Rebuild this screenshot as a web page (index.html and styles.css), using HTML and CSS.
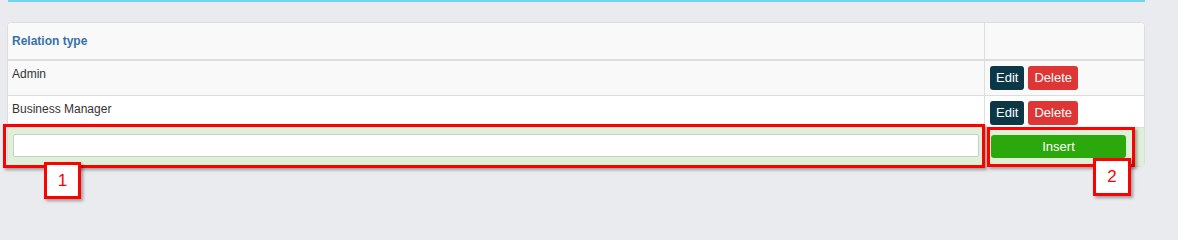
FILE: index.html
```html
<!DOCTYPE html>
<html>
<head>
<meta charset="utf-8">
<link rel="stylesheet" href="styles.css">
</head>
<body>
<div class="topline"></div>
<div class="panel">
  <div class="row head">
    <div class="cell first">Relation type</div>
    <div class="cell"></div>
  </div>
  <div class="row odd">
    <div class="cell first">Admin</div>
    <div class="cell actions"><button class="btn edit">Edit</button><button class="btn del">Delete</button></div>
  </div>
  <div class="row even">
    <div class="cell first">Business Manager</div>
    <div class="cell actions"><button class="btn edit">Edit</button><button class="btn del">Delete</button></div>
  </div>
  <div class="row insert">
    <div class="cell first inputcell"><input class="field" type="text"></div>
    <div class="cell btncell"><button class="btn ins">Insert</button></div>
  </div>
</div>
<div class="mark box1"></div>
<div class="mark box2"></div>
<div class="label label1">1</div>
<div class="label label2">2</div>
</body>
</html>
```

FILE: styles.css
```css
* { box-sizing: border-box; }
html { height: 204px; overflow: hidden; background: #eaebef; }
body {
  margin: 0;
  background: #eaebef;
  font-family: "Liberation Sans", Arial, sans-serif;
  font-size: 12px;
  color: #333;
  position: relative;
  height: 204px;
  overflow: hidden;
}
.topline {
  margin-left: 8px;
  width: 1137px;
  height: 2px;
  background: #72d3ec;
}
.panel {
  margin: 20px 0 0 7px;
  width: 1138px;
  border: 1px solid #dddddd;
  border-radius: 4px;
  background: #fff;
  overflow: hidden;
}
.row {
  display: grid;
  grid-template-columns: 977px 1fr;
}
.cell { padding: 0 4px; }
.cell.first { border-right: 1px solid #dddddd; }
.head {
  height: 38px;
  background: #f9f9f9;
  border-bottom: 2px solid #dddddd;
}
.head .cell {
  padding-top: 11px;
  font-weight: bold;
  color: #3772a6;
}
.odd {
  height: 35px;
  background: #f9f9f9;
  border-bottom: 1px solid #dddddd;
}
.even {
  height: 32px;
  background: #fff;
  border-bottom: 1px solid #dddddd;
}
.odd .first, .even .first { padding-top: 6px; }
.actions {
  padding: 5px 5px 0;
  display: flex;
  gap: 4px;
  align-items: flex-start;
}
.btn {
  border: none;
  font-family: "Liberation Sans", Arial, sans-serif;
  font-size: 13px;
  color: #fff;
  height: 24px;
  padding: 0 6px;
  border-radius: 3px;
  line-height: 24px;
  cursor: pointer;
}
.edit { background: #0b3746; }
.del { background: #de3535; }
.insert {
  height: 38px;
  background: #dff0d8;
}
.insert .first { border-right-color: #dff0d8; }
.inputcell { padding: 6px 5px 0 5px; }
.field {
  display: block;
  width: 966px;
  height: 23px;
  border: 1px solid #cccccc;
  border-radius: 2px;
  background: #fff;
}
.btncell { padding: 7px 6px 0; }
.ins {
  display: block;
  width: 135px;
  height: 23px;
  line-height: 23px;
  background: #2ba80b;
}
.mark {
  position: absolute;
  border: 3px solid #ff0000;
  box-shadow: 2px 2px 3px rgba(0,0,0,0.35);
}
.box1 { left: 3px; top: 124px; width: 982px; height: 44px; }
.box2 { left: 987px; top: 127px; width: 148px; height: 40px; }
.label {
  position: absolute;
  border: 3px solid #ff0000;
  background: #fff;
  color: #ff0000;
  font-size: 17px;
  display: flex;
  align-items: center;
  justify-content: center;
  box-shadow: 2px 2px 3px rgba(0,0,0,0.35);
}
.label1 { left: 44px; top: 162px; width: 37px; height: 37px; }
.label2 { left: 1093px; top: 158px; width: 38px; height: 38px; }
```
